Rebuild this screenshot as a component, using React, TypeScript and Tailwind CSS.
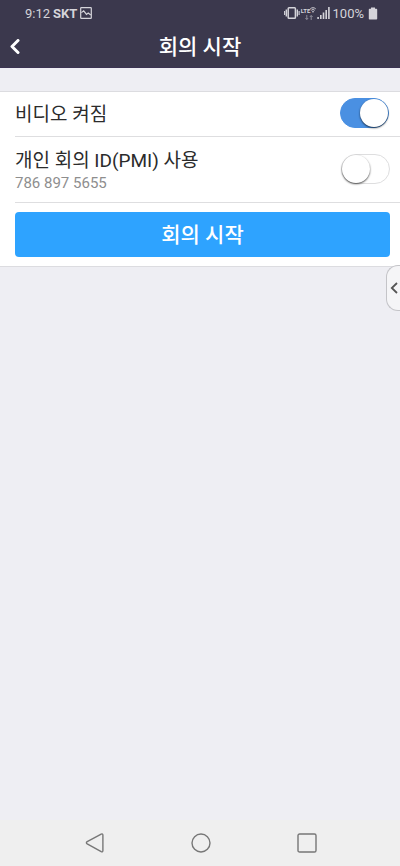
import { useState } from 'react';

interface ToggleProps {
  id: string;
  checked: boolean;
  onChange: (checked: boolean) => void;
}

function Toggle({ id, checked, onChange }: ToggleProps) {
  return (
    <input
      id={id}
      type="checkbox"
      role="switch"
      checked={checked}
      onChange={(e) => onChange(e.target.checked)}
      className="flex h-[30px] w-[49px] shrink-0 appearance-none items-center rounded-full border border-[#dededf] bg-white before:block before:size-7 before:shrink-0 before:rounded-full before:bg-white before:shadow-[0_1px_2px_rgba(0,0,0,0.7)] checked:justify-end checked:border-[#4a90e2] checked:bg-[#4a90e2]"
    />
  );
}

function StatusBar() {
  return (
    <div className="flex h-[26px] items-center justify-between pr-[22px] pl-[25px] text-[13px] leading-none text-[#d5d4da]">
      <div className="flex items-center gap-[3px]">
        <span>9:12</span>
        <span className="font-bold">SKT</span>
        <svg width="12" height="12" viewBox="0 0 12 12" fill="none" stroke="currentColor" strokeWidth="1.2">
          <rect x="0.7" y="0.7" width="10.6" height="10.6" rx="0.6" />
          <path d="M1.4 5.6 3.7 3.8 6.5 7.4 8.2 6 10.8 8" />
        </svg>
      </div>
      <div className="flex items-center">
        <svg width="16" height="14" viewBox="0 0 16 14" fill="none" stroke="currentColor">
          <rect x="4.2" y="1.7" width="7.2" height="10.6" rx="0.8" strokeWidth="1.5" />
          <path d="M2.3 3.5v7M13.3 3.5v7" strokeWidth="1.4" />
          <path d="M0.6 5v4M15.1 5v4" strokeWidth="1.1" />
        </svg>
        <div className="flex w-[17px] flex-col items-center pl-px">
          <div className="flex items-center">
            <span className="text-[6px] leading-[7px] font-bold">LTE</span>
            <svg width="6" height="6" viewBox="0 0 6 6" fill="none" stroke="currentColor" strokeWidth="1">
              <path d="M0.3 1.8C1.8 0.4 4.2 0.4 5.7 1.8M1.3 3.3C2.2 2.4 3.8 2.4 4.7 3.3" />
              <circle cx="3" cy="4.8" r="0.4" fill="currentColor" />
            </svg>
          </div>
          <svg className="mt-px opacity-60" width="8" height="5" viewBox="0 0 8 5" fill="none" stroke="currentColor" strokeWidth="0.9">
            <path d="M1.8 0v4.4M0.4 3 1.8 4.5 3.2 3M6.2 5V0.6M4.8 2 6.2 0.5 7.6 2" />
          </svg>
        </div>
        <svg width="13" height="12" viewBox="0 0 13 12" fill="currentColor">
          <rect x="0.3" y="10" width="1.6" height="2" />
          <rect x="3" y="8" width="1.6" height="4" />
          <rect x="5.7" y="5.5" width="1.6" height="6.5" />
          <rect x="8.4" y="3" width="1.6" height="9" />
          <rect x="11.1" y="0" width="1.6" height="12" />
        </svg>
        <span className="ml-[3px]">100%</span>
        <svg className="ml-1" width="10" height="13" viewBox="0 0 10 13" fill="currentColor">
          <path d="M3 0.5h4v1.3h1.4q0.8 0 0.8 0.8v9.2q0 0.8-0.8 0.8H1.6q-0.8 0-0.8-0.8V2.6q0-0.8 0.8-0.8H3z" />
        </svg>
      </div>
    </div>
  );
}

function Header() {
  return (
    <header className="border-b border-[#3b3352] bg-[#3b384d]">
      <StatusBar />
      <div className="grid h-[41px] grid-cols-[40px_1fr_40px] items-center">
        <button type="button" aria-label="뒤로" className="flex h-full items-center pl-[9px]">
          <svg width="11" height="16" viewBox="0 0 11 16" fill="none" stroke="#fff" strokeWidth="3" strokeLinecap="round" strokeLinejoin="round">
            <path d="M9 1.5 3 7.5l6 6" />
          </svg>
        </button>
        <h1 className="text-center text-[21px] leading-6 font-medium text-white">회의 시작</h1>
      </div>
    </header>
  );
}

function NavigationBar() {
  return (
    <nav className="flex h-[46px] items-center justify-around bg-[#efefef] pr-10 pl-[42px] text-[#777]">
      <button type="button" aria-label="이전">
        <svg width="20" height="20" viewBox="0 0 20 20" fill="none" stroke="currentColor" strokeWidth="1.4" strokeLinejoin="round">
          <path d="M16.2 1.1 2.2 8.7q-1.6 1.1 0 2.2l14 7.8q1.7 0.6 1.7-1.2V2.3q0-1.9-1.7-1.2z" />
        </svg>
      </button>
      <button type="button" aria-label="홈">
        <svg width="20" height="20" viewBox="0 0 20 20" fill="none" stroke="currentColor" strokeWidth="1.4">
          <circle cx="10" cy="10" r="9" />
        </svg>
      </button>
      <button type="button" aria-label="최근 앱">
        <svg width="20" height="20" viewBox="0 0 20 20" fill="none" stroke="currentColor" strokeWidth="1.4">
          <rect x="1" y="1" width="18" height="18" rx="1.6" />
        </svg>
      </button>
    </nav>
  );
}

export default function App() {
  const [videoOn, setVideoOn] = useState(true);
  const [usePmi, setUsePmi] = useState(false);

  return (
    <div className="relative flex min-h-screen flex-col bg-[#eeeef3] font-[Roboto,'Noto_Sans_CJK_KR',sans-serif]">
      <Header />

      <main className="flex-1 pt-[23px]">
        <section className="border-y border-[#dcdce0] bg-white pl-[15px]">
          <div className="flex items-center justify-between border-b border-[#dedee0] pt-[6px] pr-[11px] pb-2">
            <label htmlFor="video" className="pt-1 text-[19px] leading-6 text-[#2b2b2b]">
              비디오 켜짐
            </label>
            <Toggle id="video" checked={videoOn} onChange={setVideoOn} />
          </div>
          <div className="flex items-center justify-between border-b border-[#dedee0] pt-2 pr-[10px] pb-[9px]">
            <div className="flex flex-col pt-1">
              <label htmlFor="pmi" className="text-[19px] leading-6 text-[#2b2b2b]">
                개인 회의 ID(PMI) 사용
              </label>
              <span className="text-[15px] leading-5 text-[#8e8e8e]">786 897 5655</span>
            </div>
            <Toggle id="pmi" checked={usePmi} onChange={setUsePmi} />
          </div>
          <div className="py-[9px] pr-[10px]">
            <button
              type="button"
              className="h-[45px] w-full rounded bg-[#2ea3ff] text-[21px] leading-6 font-medium text-white"
            >
              회의 시작
            </button>
          </div>
        </section>
      </main>

      <NavigationBar />

      {/* edge panel handle, floats over the page */}
      <button
        type="button"
        aria-label="패널 열기"
        className="absolute top-[265px] right-0 flex h-[46px] w-[14px] items-center justify-center rounded-l-xl border border-r-0 border-[#c4c4c8] bg-[#f5f5f7]"
      >
        <svg width="8" height="12" viewBox="0 0 8 12" fill="none" stroke="#555" strokeWidth="1.8">
          <path d="M7 1 1.8 6 7 11" />
        </svg>
      </button>
    </div>
  );
}
